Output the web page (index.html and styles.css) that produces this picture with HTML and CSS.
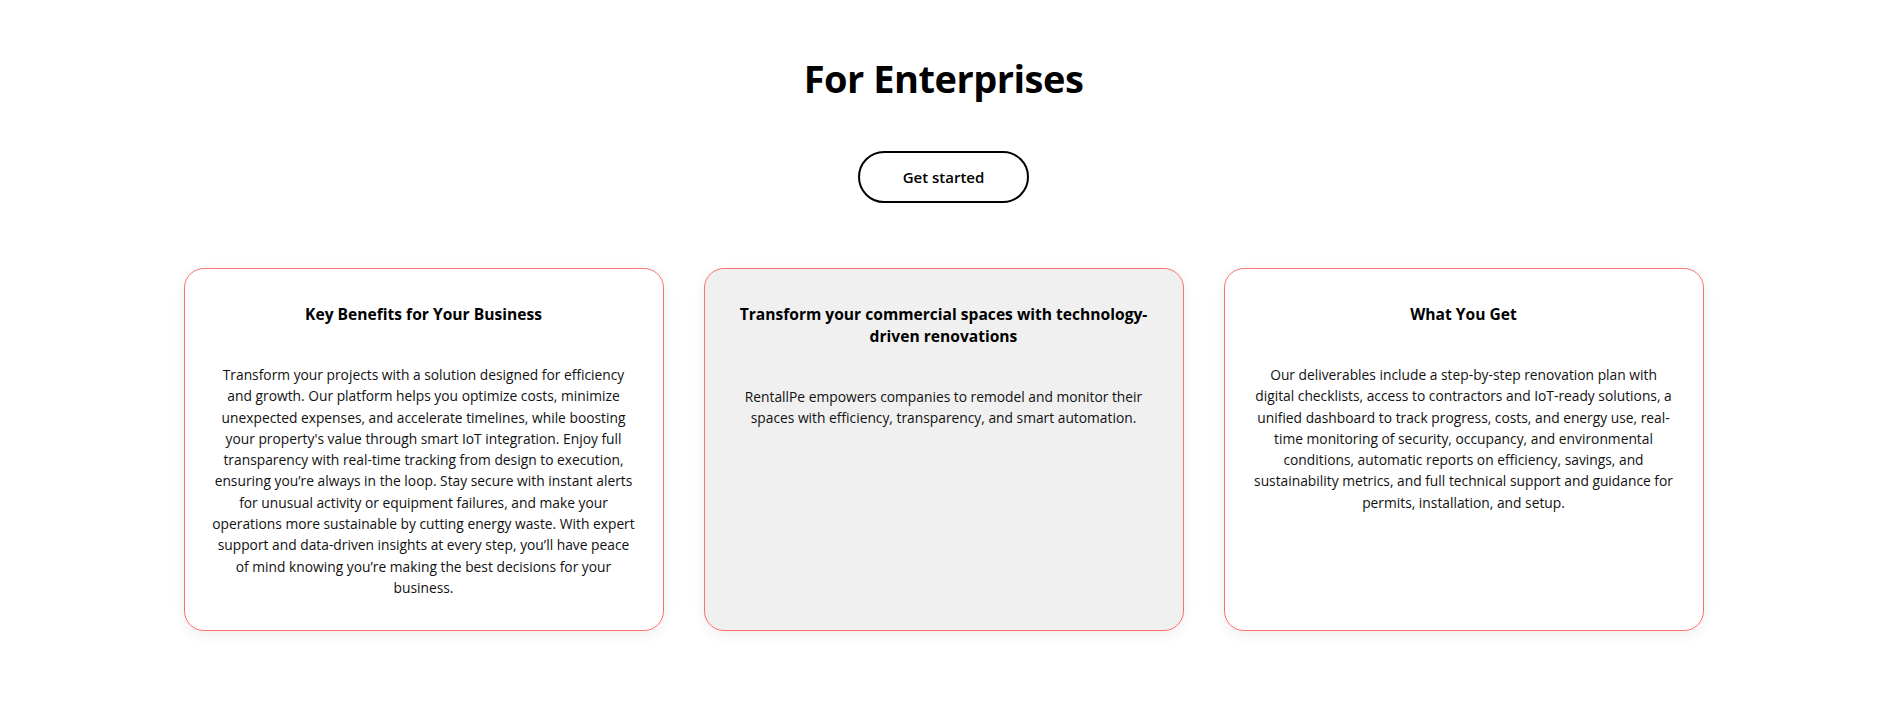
FILE: index.html
```html
<!DOCTYPE html>
<html lang="en">
<head>
<meta charset="utf-8">
<title>For Enterprises</title>
<link rel="stylesheet" href="styles.css">
</head>
<body>
<section class="enterprise">
  <h1 class="enterprise__title">For Enterprises</h1>
  <a class="enterprise__cta" href="#">Get started</a>
  <div class="cards">
    <article class="card">
      <h3 class="card__title">Key Benefits for Your Business</h3>
      <p class="card__text">Transform your projects with a solution designed for efficiency<br>
        and growth. Our platform helps you optimize costs, minimize<br>
        unexpected expenses, and accelerate timelines, while boosting<br>
        your property's value through smart IoT integration. Enjoy full<br>
        transparency with real-time tracking from design to execution,<br>
        ensuring you’re always in the loop. Stay secure with instant alerts<br>
        for unusual activity or equipment failures, and make your<br>
        operations more sustainable by cutting energy waste. With expert<br>
        support and data-driven insights at every step, you’ll have peace<br>
        of mind knowing you’re making the best decisions for your<br>
        business.</p>
    </article>
    <article class="card card--muted">
      <h3 class="card__title">Transform your commercial spaces with technology-<br>driven renovations</h3>
      <p class="card__text">RentallPe empowers companies to remodel and monitor their<br>
        spaces with efficiency, transparency, and smart automation.</p>
    </article>
    <article class="card">
      <h3 class="card__title">What You Get</h3>
      <p class="card__text">Our deliverables include a step-by-step renovation plan with<br>
        digital checklists, access to contractors and IoT-ready solutions, a<br>
        unified dashboard to track progress, costs, and energy use, real-<br>time monitoring of security, occupancy, and environmental<br>
        conditions, automatic reports on efficiency, savings, and<br>
        sustainability metrics, and full technical support and guidance for<br>
        permits, installation, and setup.</p>
    </article>
  </div>
</section>
</body>
</html>
```
FILE: styles.css
```css
* { box-sizing: border-box; }

body {
  margin: 0;
  background: #ffffff;
  color: #000000;
  font-family: "Open Sans", "Noto Sans", sans-serif;
}

.enterprise {
  display: flex;
  flex-direction: column;
  align-items: center;
  padding: 50px 0 60px;
}

.enterprise__title {
  margin: 0;
  font-size: 38px;
  line-height: 56px;
  font-weight: 700;
  letter-spacing: -0.5px;
}

.enterprise__cta {
  margin-top: 45px;
  width: 171px;
  height: 52px;
  display: flex;
  align-items: center;
  justify-content: center;
  border: 2px solid #000;
  border-radius: 26px;
  color: #000;
  text-decoration: none;
  font-size: 15px;
  font-weight: 600;
}

.cards {
  margin-top: 65px;
  display: grid;
  grid-template-columns: repeat(3, 480px);
  gap: 40px;
}

.card {
  background: #ffffff;
  border: 1px solid #ff6f6f;
  border-radius: 20px;
  box-shadow: 0 4px 14px rgba(0, 0, 0, 0.07);
  padding: 34px 16px 32px;
  text-align: center;
}

.card--muted {
  background: #f0f0f0;
}

.card__title {
  margin: 0;
  font-size: 15.6px;
  line-height: 22px;
  font-weight: 700;
}

.card__text {
  margin: 39px 0 0;
  font-size: 13.8px;
  line-height: 21.3px;
  color: #111;
}
```
